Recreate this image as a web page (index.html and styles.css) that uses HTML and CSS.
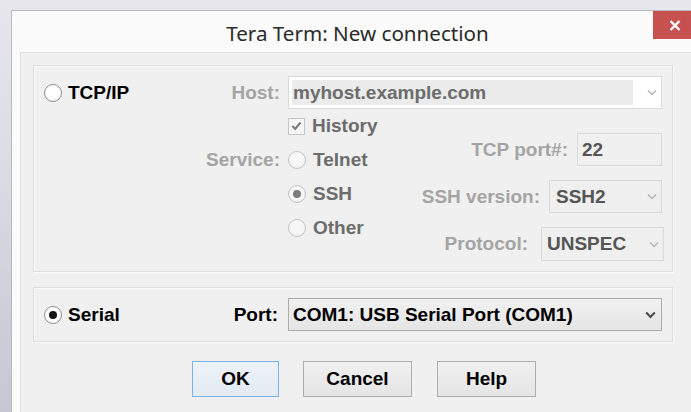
FILE: index.html
```html
<!DOCTYPE html>
<html lang="en">
<head>
<meta charset="utf-8">
<title>Tera Term: New connection</title>
<link rel="stylesheet" href="styles.css">
</head>
<body>
<div class="window">
  <div class="titlebar">
    <span class="title">Tera Term: New connection</span>
    <button class="close" type="button" aria-label="Close">
      <svg width="12" height="11" viewBox="0 0 12 11"><path d="M1.5 1 L10.5 10 M10.5 1 L1.5 10" stroke="#fff" stroke-width="2.4" fill="none"/></svg>
    </button>
  </div>

  <div class="client">
    <div class="group tcp">
      <div class="line">
        <label class="choice"><span class="radio"></span>TCP/IP</label>
        <span class="cap dim">Host:</span>
        <div class="combo host">
          <span class="edit">myhost.example.com</span>
          <svg class="chev" width="10" height="7" viewBox="0 0 10 7"><path d="M1 1.5 L5 5.5 L9 1.5" stroke="#b4b4b4" stroke-width="1.4" fill="none"/></svg>
        </div>
      </div>

      <div class="line service">
        <span></span>
        <span class="cap dim service-cap">Service:</span>
        <div class="service-body">
          <div class="options">
            <label class="opt"><span class="check"><svg width="11" height="10" viewBox="0 0 11 10"><path d="M1.5 5 L4.2 8 L9.5 1.5" stroke="#7a7a7a" stroke-width="2" fill="none"/></svg></span>History</label>
            <label class="opt"><span class="radio off"></span>Telnet</label>
            <label class="opt"><span class="radio off on"></span>SSH</label>
            <label class="opt"><span class="radio off"></span>Other</label>
          </div>
          <div class="fields">
            <div class="field">
              <span class="cap dim">TCP port#:</span>
              <div class="textbox port-num">22</div>
            </div>
            <div class="field">
              <span class="cap dim">SSH version:</span>
              <div class="combo flat ssh-ver">
                <span>SSH2</span>
                <svg class="chev" width="10" height="7" viewBox="0 0 10 7"><path d="M1 1.5 L5 5.5 L9 1.5" stroke="#b4b4b4" stroke-width="1.4" fill="none"/></svg>
              </div>
            </div>
            <div class="field proto">
              <span class="cap dim">Protocol:</span>
              <div class="combo flat proto-box">
                <span>UNSPEC</span>
                <svg class="chev" width="10" height="7" viewBox="0 0 10 7"><path d="M1 1.5 L5 5.5 L9 1.5" stroke="#b4b4b4" stroke-width="1.4" fill="none"/></svg>
              </div>
            </div>
          </div>
        </div>
      </div>
    </div>

    <div class="group serial">
      <div class="line">
        <label class="choice"><span class="radio on"></span>Serial</label>
        <span class="cap port-cap">Port:</span>
        <div class="combo live">
          <span>COM1: USB Serial Port (COM1)</span>
          <svg class="chev" width="11" height="8" viewBox="0 0 11 8"><path d="M1.2 1.5 L5.5 6 L9.8 1.5" stroke="#4a4a4a" stroke-width="2" fill="none"/></svg>
        </div>
      </div>
    </div>

    <div class="buttons">
      <button class="btn default" type="button">OK</button>
      <button class="btn cancel" type="button">Cancel</button>
      <button class="btn help" type="button">Help</button>
    </div>
  </div>
</div>
</body>
</html>
```

FILE: styles.css
```css
* {
  box-sizing: border-box;
}

html,
body {
  margin: 0;
}

body {
  width: 691px;
  height: 412px;
  overflow: hidden;
  background: linear-gradient(to bottom, #e6e6ec 0%, #dadae3 45%, #c6c6d5 100%);
  font-family: "Liberation Sans", Arial, sans-serif;
}

/* window frame */
.window {
  margin: 10px 0 0 11px;
  width: 680px;
  height: 402px;
  border: 1px solid #b9b9bf;
  border-right: 0;
  border-bottom: 0;
  background: #fbfbfb;
  display: flex;
  flex-direction: column;
}

.titlebar {
  position: relative;
  flex: none;
  height: 41px;
  display: flex;
  align-items: center;
  justify-content: center;
  padding: 2px 0 0 12px;
}

.title {
  font-family: "Noto Sans", "Open Sans", sans-serif;
  font-size: 20.6px;
  color: #2a2a2a;
}

.close {
  position: absolute;
  top: 0;
  right: 0;
  width: 38px;
  height: 28px;
  border: 0;
  padding: 0 0 0 16px;
  background: #c75050;
  display: flex;
  align-items: center;
  justify-content: flex-start;
}

/* dialog body */
.client {
  flex: 1;
  margin-left: 8px;
  background: #f0f0f0;
  border-left: 1px solid #dfdfdf;
  border-top: 1px solid #dfdfdf;
  padding: 12px 0 0 12px;
}

.group {
  width: 640px;
  border: 1px solid #dcdcdc;
  box-shadow: inset 1px 1px 0 #fafafa, 1px 1px 0 #fafafa;
  padding: 10px;
}

.serial {
  margin-top: 15px;
}

.line {
  display: grid;
  grid-template-columns: 152px 76px 374px;
  column-gap: 8px;
  align-items: center;
}

.line.service {
  align-items: start;
}

.choice,
.opt,
.cap,
.combo,
.textbox,
.btn {
  font-family: "Liberation Sans", Arial, sans-serif;
  font-weight: bold;
  font-size: 19px;
}

.choice {
  display: flex;
  align-items: center;
  gap: 6px;
  color: #000;
}

.cap {
  text-align: right;
  white-space: nowrap;
  color: #000;
}

.dim {
  color: #a4a4a4;
}

.port-cap {
  padding-right: 2px;
}

.service-cap {
  margin-top: 34px;
  height: 34px;
  line-height: 34px;
}

/* radios and checkbox */
.radio {
  position: relative;
  flex: none;
  width: 18px;
  height: 18px;
  border: 1px solid #8e8e8e;
  border-radius: 50%;
  background: radial-gradient(circle at 50% 40%, #ffffff 55%, #f0f0f0 100%);
}

.radio.off {
  border-color: #c4c4c4;
  background: radial-gradient(circle at 50% 40%, #f7f7f7 50%, #ececec 100%);
}

.radio.on::after {
  content: "";
  position: absolute;
  left: 4px;
  top: 4px;
  width: 8px;
  height: 8px;
  border-radius: 50%;
  background: #141414;
}

.radio.off.on::after {
  background: #7c7c7c;
}

.check {
  flex: none;
  width: 17px;
  height: 17px;
  border: 1px solid #c4c4c4;
  background: #f6f6f6;
  display: flex;
  align-items: center;
  justify-content: center;
}

.service-body {
  display: flex;
}

.options {
  display: flex;
  flex-direction: column;
}

.opt {
  height: 34px;
  display: flex;
  align-items: center;
  gap: 7px;
  color: #6c6c6c;
}

.fields {
  flex: 1;
  margin-top: 24px;
  display: flex;
  flex-direction: column;
  align-items: flex-end;
  gap: 14px;
}

.field {
  display: flex;
  align-items: center;
  gap: 9px;
}

.field.proto {
  gap: 13px;
  margin-right: -2px;
}

/* edit and drop-down boxes */
.combo,
.textbox {
  height: 33px;
  display: flex;
  align-items: center;
  border: 1px solid #d9d9d9;
}

.chev {
  margin-left: auto;
  margin-right: 4px;
  flex: none;
}

.combo.host {
  background: #fff;
  padding: 3px;
}

.combo.host .edit {
  width: 341px;
  height: 100%;
  background: #ebebeb;
  color: #6c6c6c;
  padding-left: 1px;
  display: flex;
  align-items: center;
}

.combo.host .chev {
  margin-right: 1px;
}

.textbox {
  width: 85px;
  padding-left: 4px;
  background: #f0f0f0;
  color: #555;
}

.combo.flat {
  background: #efefef;
  color: #555;
}

.ssh-ver {
  width: 113px;
  padding-left: 6px;
}

.proto-box {
  width: 123px;
  height: 34px;
  padding-left: 5px;
}

.combo.live {
  border-color: #acacac;
  background: linear-gradient(to bottom, #f1f1f1, #e5e5e5);
  color: #000;
  padding-left: 4px;
}

.combo.live .chev {
  margin-right: 5px;
}

/* push buttons */
.buttons {
  display: flex;
  margin: 19px 0 0 159px;
}

.btn {
  height: 36px;
  padding: 0;
  border: 1px solid #adadad;
  background: linear-gradient(to bottom, #f0f0f0, #e5e5e5);
  color: #000;
}

.btn.default {
  width: 87px;
  border-color: #79b3ec;
  background: linear-gradient(to bottom, #edf2f7, #e3eaf2);
}

.btn.cancel {
  width: 109px;
  margin-left: 24px;
}

.btn.help {
  width: 99px;
  margin-left: 25px;
}
```
